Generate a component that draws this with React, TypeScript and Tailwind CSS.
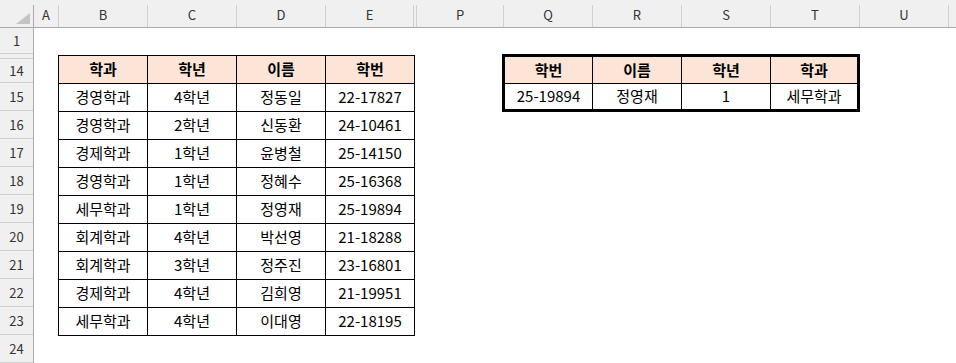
import React from "react"

const columns = [
  { label: "A", className: "w-[25px]" },
  { label: "B", className: "w-[89px]" },
  { label: "C", className: "w-[89px]" },
  { label: "D", className: "w-[89px]" },
  { label: "E", className: "w-[88px]" },
  { label: "", className: "w-[3px]" },
  { label: "P", className: "w-[87px]" },
  { label: "Q", className: "w-[89px]" },
  { label: "R", className: "w-[89px]" },
  { label: "S", className: "w-[89px]" },
  { label: "T", className: "w-[89px]" },
  { label: "U", className: "w-[89px]" },
  { label: "", className: "flex-1" },
]

const rowHeaders = [
  { label: "1", className: "h-[26px]" },
  { label: "", className: "h-[5px]" },
  { label: "14", className: "h-[24px]" },
  { label: "15", className: "h-[28px]" },
  { label: "16", className: "h-[28px]" },
  { label: "17", className: "h-[28px]" },
  { label: "18", className: "h-[28px]" },
  { label: "19", className: "h-[28px]" },
  { label: "20", className: "h-[28px]" },
  { label: "21", className: "h-[28px]" },
  { label: "22", className: "h-[28px]" },
  { label: "23", className: "h-[28px]" },
  { label: "24", className: "h-[28px]" },
]

const students = [
  ["경영학과", "4학년", "정동일", "22-17827"],
  ["경영학과", "2학년", "신동환", "24-10461"],
  ["경제학과", "1학년", "윤병철", "25-14150"],
  ["경영학과", "1학년", "정혜수", "25-16368"],
  ["세무학과", "1학년", "정영재", "25-19894"],
  ["회계학과", "4학년", "박선영", "21-18288"],
  ["회계학과", "3학년", "정주진", "23-16801"],
  ["경제학과", "4학년", "김희영", "21-19951"],
  ["세무학과", "4학년", "이대영", "22-18195"],
]

const font = "font-['Noto_Sans_CJK_KR','Noto_Sans',sans-serif]"

function ColumnHeader() {
  return (
    <div className="flex h-[28px] border-b border-[#ababab] bg-[#f0f0f0] text-[13px] text-[#333]">
      <div className="flex w-[34px] items-stretch">
        <div className="flex flex-1 items-end justify-end pb-[3px] pr-[3px]">
          <svg width="14" height="11" viewBox="0 0 14 11">
            <polygon points="14,0 14,11 0,11" fill="#c4c4c4" />
          </svg>
        </div>
        <div className="mt-[5px] w-px bg-[#ababab]" />
      </div>
      {columns.map((col, i) => (
        <div key={i} className={`flex items-stretch ${col.className}`}>
          <div className="flex flex-1 items-center justify-center pt-[2px]">
            {col.label}
          </div>
          {col.className !== "flex-1" && (
            <div className="mt-[5px] w-px bg-[#d0d0d0]" />
          )}
        </div>
      ))}
    </div>
  )
}

function Cell({ text, head }: { text: string; head?: boolean }) {
  return (
    <div
      className={`flex items-center justify-center text-[15px] text-black ${
        head ? "bg-[#fce4d6] font-bold" : "bg-white"
      }`}
    >
      {text}
    </div>
  )
}

export default function App() {
  return (
    <div
      className={`h-[363px] w-[956px] overflow-hidden bg-white ${font}`}
    >
      <ColumnHeader />
      <div className="flex">
        <div className="flex w-[34px] flex-col border-r border-[#ababab] bg-[#f0f0f0] text-[13px] text-[#333]">
          {rowHeaders.map((row, i) => (
            <div
              key={i}
              className={`flex items-center justify-center border-b border-[#d0d0d0] ${row.className}`}
            >
              {row.label}
            </div>
          ))}
        </div>

        <div className="flex flex-1 flex-col">
          <div className="h-[26px]" />
          <div className="flex items-start pl-[24px]">
            {/* left table */}
            <div className="mt-px grid grid-cols-[88px_88px_88px_88px] grid-rows-[repeat(10,27px)] gap-px border border-black bg-black">
              {["학과", "학년", "이름", "학번"].map((h) => (
                <Cell key={h} text={h} head />
              ))}
              {students.map((row, i) =>
                row.map((v, j) => <Cell key={`${i}-${j}`} text={v} />),
              )}
            </div>

            {/* lookup result */}
            <div className="ml-[87px] grid grid-cols-[87px_88px_88px_86px] grid-rows-[26px_25px] gap-px border-[3px] border-black bg-black">
              {["학번", "이름", "학년", "학과"].map((h) => (
                <Cell key={h} text={h} head />
              ))}
              {["25-19894", "정영재", "1", "세무학과"].map((v) => (
                <Cell key={v} text={v} />
              ))}
            </div>
          </div>
        </div>
      </div>
    </div>
  )
}
